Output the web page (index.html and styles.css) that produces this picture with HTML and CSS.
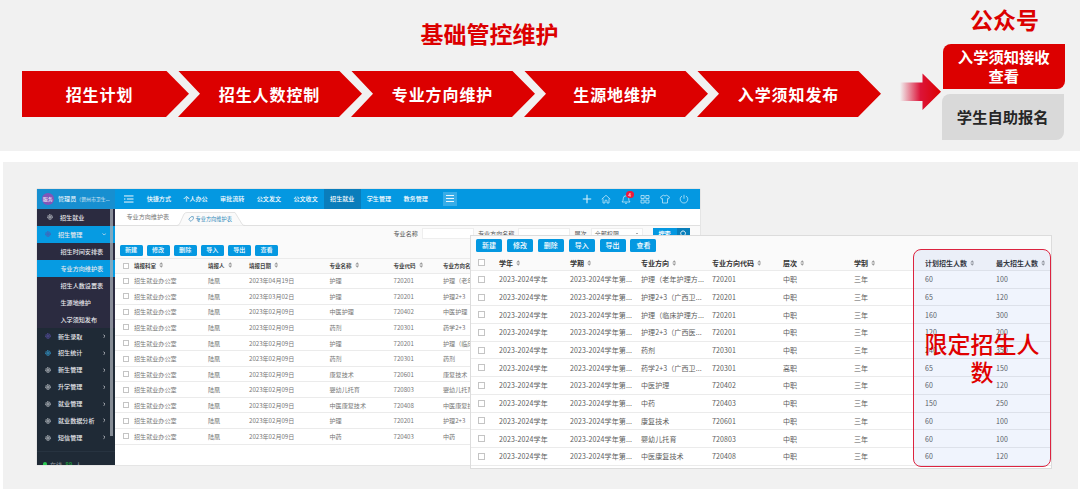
FILE: index.html
```html
<!DOCTYPE html>
<html lang="zh-CN">
<head>
    <meta charset="UTF-8">
    <meta name="viewport" content="width=device-width, initial-scale=1.0">
    <title>基础管控维护</title>
    <link rel="stylesheet" href="styles.css">
</head>
<body>

<!-- Shared icons -->
<svg class="defs" width="0" height="0">
    <symbol id="sort" viewBox="0 0 6 8"><path d="M3 0.3 5.6 3.2H0.4zM3 7.7 5.6 4.8H0.4z" fill="#999"/></symbol>
    <symbol id="gear" viewBox="0 0 12 12"><circle cx="6" cy="6" r="4.7" fill="none" stroke="currentColor" stroke-width="1.8" stroke-dasharray="2.6 1"/><circle cx="6" cy="6" r="2.3" fill="none" stroke="currentColor" stroke-width="1.8"/></symbol>
    <symbol id="chev" viewBox="0 0 6 10"><path d="M1 1l4 4-4 4" fill="none" stroke="currentColor" stroke-width="1.8"/></symbol>
</svg>

<div class="flow">
    <div class="flow-main">
        <h1>基础管控维护</h1>
        <div class="steps">
            <div class="step first">招生计划</div>
            <div class="step">招生人数控制</div>
            <div class="step">专业方向维护</div>
            <div class="step">生源地维护</div>
            <div class="step">入学须知发布</div>
        </div>
    </div>
    <svg class="arrow" viewBox="0 0 42 38">
        <defs><linearGradient id="fade"><stop offset="0" stop-color="#dc1438" stop-opacity="0"/><stop offset=".5" stop-color="#dc1438"/><stop offset="1" stop-color="#dc0000"/></linearGradient></defs>
        <path d="M0 9.5H22.5V0.5L41 18.7 22.5 37V28H0z" fill="url(#fade)"/>
    </svg>
    <div class="account">
        <h2>公众号</h2>
        <div class="card red">入学须知接收<br>查看</div>
        <div class="card gray">学生自助报名</div>
    </div>
</div>

<div class="stage">

    <!-- Admin window -->
    <div class="window admin">
        <div class="sidebar">
            <div class="user"><span class="avatar">服务</span><span>管理员</span><span class="org">（贺州市卫生...</span></div>
            <div class="menu">
                <div class="item top"><svg class="gear"><use href="#gear"/></svg>招生就业</div>
                <div class="item open"><svg class="gear violet"><use href="#gear"/></svg>招生管理<svg class="chev down"><use href="#chev"/></svg></div>
                <div class="item sub">招生时间安排表</div>
                <div class="item sub active">专业方向维护表</div>
                <div class="item sub">招生人数设置表</div>
                <div class="item sub">生源地维护</div>
                <div class="item sub">入学须知发布</div>
                <div class="item"><svg class="gear violet"><use href="#gear"/></svg>新生录取<svg class="chev"><use href="#chev"/></svg></div>
                <div class="item"><svg class="gear cyan"><use href="#gear"/></svg>招生统计<svg class="chev"><use href="#chev"/></svg></div>
                <div class="item"><svg class="gear"><use href="#gear"/></svg>新生管理<svg class="chev"><use href="#chev"/></svg></div>
                <div class="item"><svg class="gear"><use href="#gear"/></svg>升学管理<svg class="chev"><use href="#chev"/></svg></div>
                <div class="item"><svg class="gear"><use href="#gear"/></svg>就业管理<svg class="chev"><use href="#chev"/></svg></div>
                <div class="item"><svg class="gear"><use href="#gear"/></svg>就业数据分析<svg class="chev"><use href="#chev"/></svg></div>
                <div class="item"><svg class="gear"><use href="#gear"/></svg>短信管理<svg class="chev"><use href="#chev"/></svg></div>
            </div>
            <div class="scroll"></div>
            <div class="online"><i></i>在线 <b>89</b> 人</div>
        </div>

        <div class="main">
            <div class="topbar">
                <svg class="fold" viewBox="0 0 10 8"><path d="M0 .8h10M3 4h7M0 7.2h10M0 4h1.5" stroke="#fff" stroke-width="1"/></svg>
                <div class="nav">
                    <span>快捷方式</span><span>个人办公</span><span>审批流转</span><span>公文发文</span><span>公文收文</span><span class="on">招生就业</span><span>学生管理</span><span>教务管理</span>
                </div>
                <div class="more"><svg viewBox="0 0 8 7"><path d="M0 .5h8M0 3.5h8M0 6.5h8" stroke="#fff" stroke-width=".9"/></svg></div>
                <div class="tools">
                    <svg viewBox="0 0 10 10"><path d="M5 .8v8.4M.8 5h8.4" stroke-width="1.1"/></svg>
                    <svg viewBox="0 0 10 10"><path d="M.7 5.2 5 1.3l4.3 3.9M2 4.5V9h2V7a1 1 0 0 1 2 0v2h2V4.5"/></svg>
                    <div class="bell"><svg viewBox="0 0 10 10"><path d="M1 8Q2.3 6.8 2.3 4.5A2.7 2.7 0 0 1 7.7 4.5Q7.7 6.8 9 8zM4 9.3h2"/></svg><em>4</em></div>
                    <svg viewBox="0 0 10 10"><path d="M1 1.5h3.2v3H1zM5.8 1.5H9v3H5.8zM1 6h3.2v3H1zM5.8 6H9v3H5.8z"/></svg>
                    <svg viewBox="0 0 10 10"><path d="M3.3 1.2Q5 2.7 6.7 1.2L9.5 3 8.5 5l-1-.4V9h-5V4.6l-1 .4L.5 3z"/></svg>
                    <svg viewBox="0 0 10 10"><path d="M5 .8v4M3 2A3.8 3.8 0 1 0 7 2"/></svg>
                </div>
            </div>
            <div class="tabs">
                <span class="tab">专业方向维护表</span>
                <div class="tab-on">
                    <svg class="shape" viewBox="0 0 68 14" preserveAspectRatio="none"><path d="M0 13.5Q2 13.5 3 11L7 2Q8 .5 10 .5H58L65 12Q66 13.5 68 13.5" fill="#fafafa" stroke="#ddd" stroke-width=".8"/></svg>
                    <svg class="tag" viewBox="0 0 8 8"><path d="M1 4.5 4 1l3-.2.2 3L4 7.2z" fill="none" stroke="#4c93bd"/></svg>
                    <span>专业方向维护表</span>
                </div>
            </div>
            <div class="search">
                <label>专业名称</label><i class="field"></i>
                <label>专业方向名称</label><i class="field"></i>
                <label>层次</label><i class="field select">全部权限<b></b></i>
                <div class="find"><span>搜索</span><svg viewBox="0 0 8 8"><path d="M5.5 5.5 7.5 7.5M3.5.8a2.7 2.7 0 1 0 .01 0" fill="none" stroke="#fff"/></svg></div>
            </div>
            <div class="buttons"><span>新建</span><span>修改</span><span>删除</span><span>导入</span><span>导出</span><span>查看</span></div>
            <div class="grid">
                <div class="row head"><i></i><span>填报科室<svg><use href="#sort"/></svg></span><span>填报人<svg><use href="#sort"/></svg></span><span>填报日期<svg><use href="#sort"/></svg></span><span>专业名称<svg><use href="#sort"/></svg></span><span>专业代码<svg><use href="#sort"/></svg></span><span>专业方向名称</span></div>
                <div class="row"><i></i><span>招生就业办公室</span><span>陆凰</span><span>2023年04月19日</span><span>护理</span><span>720201</span><span>护理（老年护理方向）</span></div>
                <div class="row"><i></i><span>招生就业办公室</span><span>陆凰</span><span>2023年03月02日</span><span>护理</span><span>720201</span><span>护理2+3</span></div>
                <div class="row"><i></i><span>招生就业办公室</span><span>陆凰</span><span>2023年02月09日</span><span>中医护理</span><span>720402</span><span>中医护理</span></div>
                <div class="row"><i></i><span>招生就业办公室</span><span>陆凰</span><span>2023年02月09日</span><span>药剂</span><span>720301</span><span>药学2+3</span></div>
                <div class="row"><i></i><span>招生就业办公室</span><span>陆凰</span><span>2023年02月09日</span><span>护理</span><span>720201</span><span>护理（临床护理方向）</span></div>
                <div class="row"><i></i><span>招生就业办公室</span><span>陆凰</span><span>2023年02月09日</span><span>药剂</span><span>720301</span><span>药剂</span></div>
                <div class="row"><i></i><span>招生就业办公室</span><span>陆凰</span><span>2023年02月09日</span><span>康复技术</span><span>720601</span><span>康复技术</span></div>
                <div class="row"><i></i><span>招生就业办公室</span><span>陆凰</span><span>2023年02月09日</span><span>婴幼儿托育</span><span>720803</span><span>婴幼儿托育</span></div>
                <div class="row"><i></i><span>招生就业办公室</span><span>陆凰</span><span>2023年02月09日</span><span>中医康复技术</span><span>720408</span><span>中医康复技术</span></div>
                <div class="row"><i></i><span>招生就业办公室</span><span>陆凰</span><span>2023年02月09日</span><span>护理</span><span>720201</span><span>护理2+3</span></div>
                <div class="row"><i></i><span>招生就业办公室</span><span>陆凰</span><span>2023年02月09日</span><span>中药</span><span>720403</span><span>中药</span></div>
            </div>
        </div>
    </div>

    <!-- Plan window -->
    <div class="window plan">
        <div class="buttons"><span>新建</span><span>修改</span><span>删除</span><span>导入</span><span>导出</span><span>查看</span></div>
        <div class="grid">
            <div class="row head"><i></i><span>学年<svg><use href="#sort"/></svg></span><span>学期<svg><use href="#sort"/></svg></span><span>专业方向<svg><use href="#sort"/></svg></span><span>专业方向代码<svg><use href="#sort"/></svg></span><span>层次<svg><use href="#sort"/></svg></span><span>学制<svg><use href="#sort"/></svg></span><span>计划招生人数<svg><use href="#sort"/></svg></span><span>最大招生人数<svg><use href="#sort"/></svg></span></div>
            <div class="row"><i></i><span>2023-2024学年</span><span>2023-2024学年第...</span><span>护理（老年护理方...</span><span>720201</span><span>中职</span><span>三年</span><span>60</span><span>100</span></div>
            <div class="row"><i></i><span>2023-2024学年</span><span>2023-2024学年第...</span><span>护理2+3（广西卫...</span><span>720201</span><span>中职</span><span>三年</span><span>65</span><span>120</span></div>
            <div class="row"><i></i><span>2023-2024学年</span><span>2023-2024学年第...</span><span>护理（临床护理方...</span><span>720201</span><span>中职</span><span>三年</span><span>160</span><span>300</span></div>
            <div class="row"><i></i><span>2023-2024学年</span><span>2023-2024学年第...</span><span>护理2+3（广西医...</span><span>720201</span><span>中职</span><span>三年</span><span>120</span><span>200</span></div>
            <div class="row"><i></i><span>2023-2024学年</span><span>2023-2024学年第...</span><span>药剂</span><span>720301</span><span>中职</span><span>三年</span><span>240</span><span>350</span></div>
            <div class="row"><i></i><span>2023-2024学年</span><span>2023-2024学年第...</span><span>药学2+3（广西卫...</span><span>720301</span><span>高职</span><span>三年</span><span>65</span><span>150</span></div>
            <div class="row"><i></i><span>2023-2024学年</span><span>2023-2024学年第...</span><span>中医护理</span><span>720402</span><span>中职</span><span>三年</span><span>60</span><span>120</span></div>
            <div class="row"><i></i><span>2023-2024学年</span><span>2023-2024学年第...</span><span>中药</span><span>720403</span><span>中职</span><span>三年</span><span>150</span><span>250</span></div>
            <div class="row"><i></i><span>2023-2024学年</span><span>2023-2024学年第...</span><span>康复技术</span><span>720601</span><span>中职</span><span>三年</span><span>60</span><span>100</span></div>
            <div class="row"><i></i><span>2023-2024学年</span><span>2023-2024学年第...</span><span>婴幼儿托育</span><span>720803</span><span>中职</span><span>三年</span><span>60</span><span>100</span></div>
            <div class="row"><i></i><span>2023-2024学年</span><span>2023-2024学年第...</span><span>中医康复技术</span><span>720408</span><span>中职</span><span>三年</span><span>60</span><span>120</span></div>
        </div>
        <div class="limit">限定招生人数</div>
    </div>
</div>

</body>
</html>
```
FILE: styles.css
```css
/* General Styles */
* {
    box-sizing: border-box;
}

body {
    margin: 0;
    background-color: #ffffff;
    font-family: "Noto Sans CJK SC", sans-serif;
    overflow: hidden;
}

h1, h2 {
    margin: 0;
    color: #dc0000;
    font-size: 23px;
    line-height: 30px;
    font-weight: bold;
    text-align: center;
}

i, em {
    font-style: normal;
}

.defs {
    position: absolute;
}

/* Process flow */
.flow {
    display: flex;
    align-items: flex-start;
    height: 151px;
    padding-left: 22px;
    background-color: #f1f1f1;
}

.flow-main {
    width: 859px;
    padding-top: 18px;
}

.flow-main h1 {
    padding-left: 76px;
}

.steps {
    display: flex;
    margin-top: 22.5px;
}

.step {
    width: 184px;
    height: 46.5px;
    margin-left: -11px;
    padding-right: 1px;
    background-color: #dc0000;
    clip-path: polygon(0 0, 161px 0, 100% 50%, 161px 100%, 0 100%, 22px 50%);
    color: #ffffff;
    font-size: 16px;
    font-weight: bold;
    letter-spacing: 0.9px;
    line-height: 46px;
    text-align: center;
}

.step.first {
    width: 167px;
    margin-left: 0;
    padding-right: 12px;
    clip-path: polygon(0 0, 144px 0, 100% 50%, 144px 100%, 0 100%);
}

.arrow {
    width: 42px;
    height: 38px;
    margin: 72.5px 0 0 19px;
}

.account {
    width: 123px;
    padding-top: 4px;
}

.account h2 {
    width: 125px;
}

.card {
    display: flex;
    align-items: center;
    justify-content: center;
    width: 121.5px;
    height: 45.5px;
    border-radius: 8px 0 8px 0;
    font-size: 15.3px;
    font-weight: bold;
    line-height: 18.5px;
    text-align: center;
}

.card.red {
    margin: 9.5px 0 5px 1px;
    padding-bottom: 1px;
    background-color: #dc0000;
    color: #ffffff;
}

.card.gray {
    padding-bottom: 1px;
    background-color: #d9d9d9;
    color: #262626;
}

/* Screens */
.stage {
    position: relative;
    height: 327px;
    margin: 11px 2px 0 3px;
    background-color: #f1f1f1;
}

.window {
    position: absolute;
    overflow: hidden;
    background-color: #ffffff;
    white-space: nowrap;
}

.admin {
    display: flex;
    left: 33.5px;
    top: 26.5px;
    width: 663.5px;
    height: 276.5px;
    font-size: 6.1px;
    box-shadow: 0 0 1px #aaaaaa;
}

/* Sidebar */
.sidebar {
    position: relative;
    width: 78px;
    flex: none;
    background-color: #1f2a36;
    color: #e8e8ec;
}

.user {
    display: flex;
    align-items: center;
    height: 20.5px;
    padding-left: 5.5px;
    background-color: #178fd0;
    color: #ffffff;
}

.avatar {
    width: 11.5px;
    height: 11.5px;
    margin-right: 4.5px;
    border-radius: 50%;
    background-color: #8156b8;
    font-size: 5px;
    line-height: 11px;
    text-align: center;
}

.org {
    font-size: 4.9px;
    opacity: 0.85;
}

.item {
    display: flex;
    align-items: center;
    height: 16.95px;
    padding: 0 9.5px 0 8px;
    font-weight: 500;
}

.item .gear {
    width: 6px;
    height: 6px;
    margin-right: 7.5px;
    color: #c9ced4;
}

.item .violet {
    color: #5b51a8;
}

.item .cyan {
    color: #35a5dc;
}

.chev {
    width: 2.5px;
    height: 4.5px;
    margin-left: auto;
}

.chev.down {
    transform: rotate(90deg);
}

.item.top {
    padding-left: 10px;
}

.item.top, .item.sub {
    background-color: #2b2b40;
}

.item.sub {
    padding-left: 24px;
}

.item.open, .item.active {
    background-color: #069be2;
}

.scroll {
    position: absolute;
    left: 73px;
    top: 20.5px;
    width: 3px;
    height: 227px;
    background-color: #a8adb5;
    opacity: 0.75;
}

.online {
    display: flex;
    align-items: center;
    gap: 3px;
    height: 26px;
    margin-top: 5px;
    padding-left: 6.5px;
    border-top: 1px solid #273340;
    color: #8d959d;
}

.online i {
    width: 4px;
    height: 6px;
    border-radius: 2px;
    background-color: #2ccb52;
}

.online b {
    color: #1f8b3c;
}

/* Main area */
.main {
    flex: 1;
    min-width: 0;
}

.topbar {
    display: flex;
    align-items: center;
    height: 20.5px;
    padding-left: 9.5px;
    background-color: #0498e1;
    color: #ffffff;
}

.fold {
    width: 9.5px;
    height: 8px;
    margin-right: 7px;
}

.nav {
    display: flex;
    height: 100%;
    font-weight: 500;
    line-height: 20px;
}

.nav span {
    width: 36.7px;
    text-align: center;
}

.nav .on {
    background-color: #0a7dbb;
}

.more {
    display: flex;
    align-items: center;
    justify-content: center;
    width: 14px;
    height: 13.5px;
    margin-left: 8.5px;
    background-color: #37ade8;
}

.more svg {
    width: 8px;
    height: 7px;
}

.tools {
    display: flex;
    align-items: center;
    gap: 9.5px;
    margin: 0 11px 0 auto;
}

.tools svg {
    display: block;
    width: 10px;
    height: 10px;
    fill: none;
    stroke: #d9f1fc;
    stroke-width: 0.7;
}

.bell {
    position: relative;
}

.bell em {
    position: absolute;
    right: -3px;
    top: -3px;
    width: 7.5px;
    height: 7.5px;
    border-radius: 50%;
    background-color: #f0193c;
    font-size: 5px;
    line-height: 7px;
    text-align: center;
}

.tabs {
    display: flex;
    height: 17px;
    padding-left: 12px;
    border-bottom: 1px solid #e0e0e0;
    color: #777777;
    line-height: 16.5px;
}

.tab {
    width: 51px;
}

.tab-on {
    position: relative;
    display: flex;
    align-items: center;
    gap: 2px;
    width: 66px;
    padding: 3px 0 0 10px;
    color: #2a86b8;
    font-size: 5.2px;
    line-height: 12px;
}

.tab-on .shape {
    position: absolute;
    left: -1px;
    top: 3px;
    width: 68px;
    height: 14px;
}

.tag {
    position: relative;
    width: 6px;
    height: 6px;
}

.tab-on span {
    position: relative;
}

.search {
    display: flex;
    align-items: center;
    height: 16px;
    padding: 0 0 1px 279px;
    background-color: #fafafa;
    color: #555555;
}

.field {
    width: 52px;
    height: 11.5px;
    margin: 0 4px;
    border: 1px solid #eeeeee;
    background-color: #ffffff;
}

.select {
    display: flex;
    align-items: center;
    justify-content: space-between;
    padding: 0 4px 0 3px;
}

.select b {
    border: 1.5px solid transparent;
    border-top-color: #555555;
}

.find {
    display: flex;
    align-items: center;
    width: 37px;
    height: 11.5px;
    margin-left: 6px;
    background-color: #0498e1;
    color: #ffffff;
    font-weight: bold;
}

.find span {
    width: 24px;
    text-align: center;
}

.find svg {
    width: 13px;
    height: 100%;
    padding: 2px 3px;
    background-color: #087eba;
}

/* Buttons and tables */
.buttons {
    display: flex;
    gap: 4.1px;
    padding: 2.5px 5px;
    background-color: #fafafa;
}

.buttons span {
    width: 23px;
    height: 11px;
    border-radius: 1.5px;
    background-color: #0498e1;
    color: #ffffff;
    font-weight: 500;
    line-height: 10.5px;
    text-align: center;
}

.row {
    display: grid;
    align-items: center;
    border-bottom: 1px solid #ebebeb;
}

.row i {
    width: 6px;
    height: 6px;
    border: 1px solid #c4c4c4;
    background-color: #ffffff;
}

.row svg {
    width: 4.5px;
    height: 6px;
    margin-left: 3px;
    vertical-align: -0.5px;
}

.row.head {
    background-color: #fafafa;
    color: #333333;
    font-weight: bold;
}

.admin .row {
    grid-template-columns: 11px 74px 41px 80.5px 64px 49.5px 1fr;
    height: 15.55px;
    padding-left: 8.5px;
    color: #757575;
}

.admin .head {
    border-top: 1px solid #ebebeb;
    color: #444444;
    font-size: 5.5px;
}

.plan {
    left: 467px;
    top: 73px;
    width: 582px;
    height: 234px;
    border: 1px solid #dcdcdc;
    font-size: 7px;
}

.plan .buttons {
    gap: 4.9px;
    height: 19px;
    padding: 3px 5px 0;
}

.plan .buttons span {
    width: 26px;
    height: 12.5px;
    line-height: 12px;
}

.plan .row {
    grid-template-columns: 21.5px repeat(8, 71px);
    height: 17.7px;
    padding-left: 6.5px;
    color: #5c5c5c;
    letter-spacing: 0.12px;
}

.plan .row.head {
    height: 16px;
    color: #333333;
    letter-spacing: 0;
}

.plan .row i {
    width: 7px;
    height: 7px;
}

/* Highlighted quota columns */
.limit {
    position: absolute;
    left: 442px;
    top: 13px;
    width: 138px;
    height: 218px;
    padding: 79px 10px 0;
    border: 1.5px solid #dc2440;
    border-radius: 8px;
    background-color: rgba(60, 110, 230, 0.08);
    color: #e00000;
    font-size: 23px;
    font-weight: 500;
    line-height: 28px;
    text-align: center;
    white-space: normal;
}
```
